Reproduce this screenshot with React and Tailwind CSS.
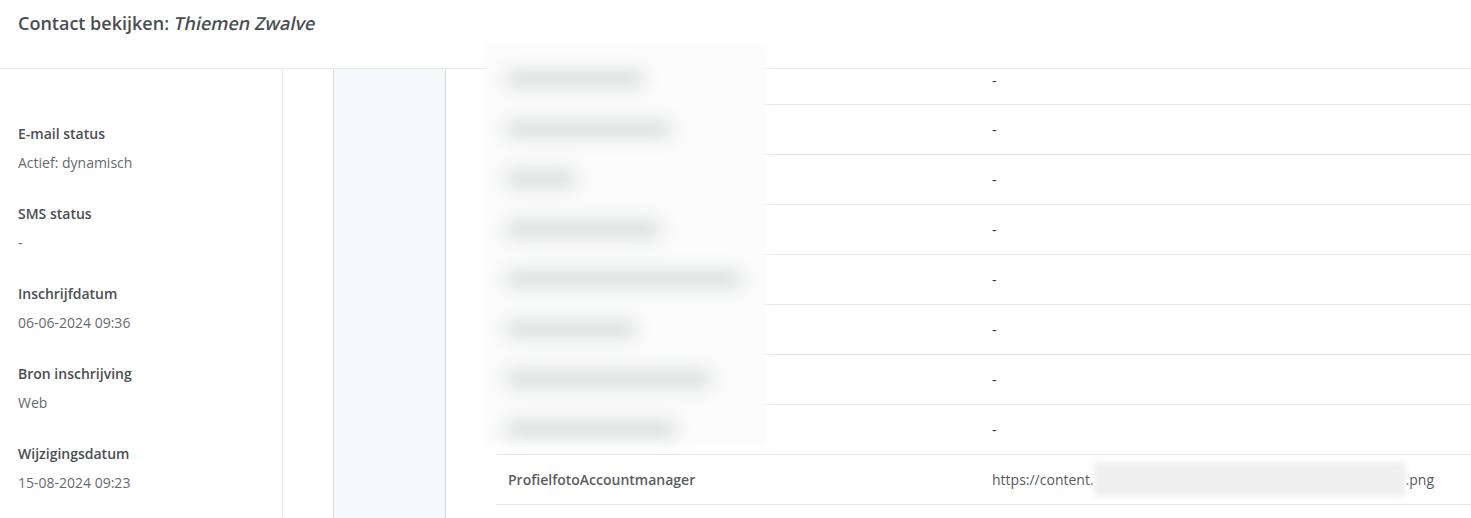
import React from "react";

const left = [
  ["E-mail status", "Actief: dynamisch"],
  ["SMS status", "-"],
  ["Inschrijfdatum", "06-06-2024 09:36"],
  ["Bron inschrijving", "Web"],
  ["Wijzigingsdatum", "15-08-2024 09:23"],
];

const blurBars = [140, 167, 72, 157, 237, 132, 207, 172];

export default function App() {
  return (
    <div
      className="relative w-[1471px] h-[518px] overflow-hidden bg-white text-[14px]"
      style={{ fontFamily: '"Open Sans", "Noto Sans", sans-serif' }}
    >
      <div className="h-[69px] border-b border-[#e8e8e8] pl-[18px] pt-[10px]">
        <h1 className="text-[18px] leading-[26px] font-semibold text-[#4a4e54]">
          Contact bekijken:{" "}
          <span className="inline-block ml-[-2px] not-italic font-semibold -skew-x-12 origin-bottom">Thiemen Zwalve</span>
        </h1>
      </div>
      <div className="flex h-[449px]">
        <div className="w-[283px] border-r border-[#e8e8e8] pl-[18px] pt-[55px] flex flex-col gap-[31px]">
          {left.map(([k, v]) => (
            <div key={k} className="flex flex-col gap-[9px]">
              <div className="leading-[20px] font-semibold text-[#4a4e54]">{k}</div>
              <div className="leading-[20px] text-[#666a70]">{v}</div>
            </div>
          ))}
        </div>
        <div className="w-[51px] border-r border-[#dcdcdc]" />
        <div className="w-[112px] border-r border-[#dcdcdc] bg-[#f7f8fa]" />
        <div className="flex-1 pl-[50px]">
          <div className="h-[36px] flex items-start border-b border-[#e8e8e8]">
            <div className="w-[484px]" />
            <div className="pl-[12px] pt-[2px] leading-[20px] text-[#333]">-</div>
          </div>
          {Array.from({ length: 7 }).map((_, i) => (
            <div key={i} className="h-[50px] flex items-center border-b border-[#e8e8e8]">
              <div className="w-[484px]" />
              <div className="pl-[12px] leading-[20px] text-[#333]">-</div>
            </div>
          ))}
          <div className="h-[50px] flex items-center border-b border-[#e8e8e8]">
            <div className="w-[484px] pl-[12px] font-semibold text-[#5a5e64]">ProfielfotoAccountmanager</div>
            <div className="pl-[12px] flex items-center text-[#555a60]">
              <span>https://content.</span>
              <span className="relative w-[312px] h-[20px]">
                <span className="absolute -top-[8px] left-0 w-[312px] h-[34px] bg-[#efefef] blur-[3px]" />
              </span>
              <span>.png</span>
            </div>
          </div>
        </div>
      </div>
      <div className="absolute left-[485px] top-[45px] w-[282px] h-[400px] bg-[#fbfbfb] blur-[3px] pt-[9px]">
        {blurBars.map((w, i) => (
          <div key={i} className="h-[50px] flex items-center">
            <div className="ml-[20px] h-[18px] rounded-full bg-[#dcdfdf] blur-[8px]" style={{ width: w }} />
          </div>
        ))}
      </div>
    </div>
  );
}
